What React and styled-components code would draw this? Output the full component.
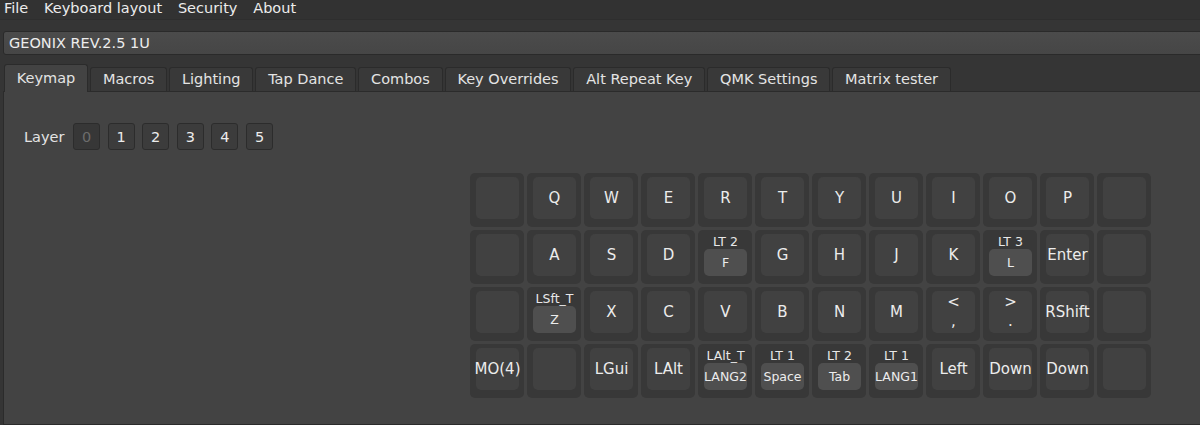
import React from 'react';
import styled, {createGlobalStyle} from 'styled-components';

const GlobalStyle = createGlobalStyle`
    body {
        margin : 0;
        background : #353535;
        font-family : "DejaVu Sans", "Noto Sans", sans-serif;
        font-size : 14.5px;
        color : #e6e6e6;
        overflow : hidden;
    }
`;

const menus = ['File','Keyboard layout','Security','About'];
const tabs = ['Keymap','Macros','Lighting','Tap Dance','Combos','Key Overrides','Alt Repeat Key','QMK Settings','Matrix tester'];
const layers = [0,1,2,3,4,5];

// a key is either a plain label, a tap key {top, label} or a two line shifted key [upper, lower]
const keymap = [
    ['','Q','W','E','R','T','Y','U','I','O','P',''],
    ['','A','S','D',{top:'LT 2',label:'F'},'G','H','J','K',{top:'LT 3',label:'L'},'Enter',''],
    ['',{top:'LSft_T',label:'Z'},'X','C','V','B','N','M',['<',','],['>','.'],'RShift',''],
    ['MO(4)','','LGui','LAlt',{top:'LAlt_T',label:'LANG2'},{top:'LT 1',label:'Space'},{top:'LT 2',label:'Tab'},{top:'LT 1',label:'LANG1'},'Left','Down','Down',''],
];

const Key = ({data})=> {
    if (data && typeof data === 'object' && !Array.isArray(data)) {
        return (
            <KeyBody>
                <TapLabel>{data.top}</TapLabel>
                <TapCap>{data.label}</TapCap>
            </KeyBody>
        );
    }
    return (
        <KeyBody>
            <Cap>
                {Array.isArray(data)
                    ? <Stack><span>{data[0]}</span><span>{data[1]}</span></Stack>
                    : data}
            </Cap>
        </KeyBody>
    );
};

const App = ()=> {
    return (
        <Window>
            <GlobalStyle/>
            <MenuBar>
                {menus.map(m=> <MenuItem key={m}>{m}</MenuItem>)}
            </MenuBar>
            <DeviceSelect>GEONIX REV.2.5 1U</DeviceSelect>
            <TabBar>
                {tabs.map((t,i)=> <Tab key={t} active={i === 0}>{t}</Tab>)}
            </TabBar>
            <Panel>
                <LayerRow>
                    <LayerLabel>Layer</LayerLabel>
                    {layers.map(l=> <LayerButton key={l} disabled={l === 0}>{l}</LayerButton>)}
                </LayerRow>
                <Keyboard>
                    {keymap.flat().map((k,i)=> <Key key={i} data={k}/>)}
                </Keyboard>
            </Panel>
        </Window>
    );
};

const Window = styled.div`
    display : flex;
    flex-direction : column;
    width : 1200px;
    height : 425px;
    overflow : hidden;
`;
const MenuBar = styled.div`
    display : flex;
    gap : 15.8px;
    height : 19px;
    padding-left : 4px;
    background : #323232;
    border-bottom : 1px solid #2e2e2e;
    line-height : 16px;
`;
const MenuItem = styled.span`
    color : #ececec;
`;
const DeviceSelect = styled.div`
    margin : 11px 0 0 3px;
    width : 1260px;
    height : 24px;
    box-sizing : border-box;
    padding-left : 5px;
    line-height : 22px;
    background : linear-gradient(#4b4b4b, #464646);
    border : 1px solid #2a2a2a;
    border-radius : 3px;
    color : #ededed;
`;
const TabBar = styled.div`
    display : flex;
    align-items : flex-end;
    gap : 2px;
    margin-top : 9px;
    padding-left : 4px;
    height : 27px;
`;
const Tab = styled.div`
    position : relative;
    z-index : ${p=> p.active ? 1 : 0};
    height : ${p=> p.active ? 28 : 24}px;
    margin-bottom : ${p=> p.active ? -1 : 0}px;
    box-sizing : border-box;
    padding : ${p=> p.active ? 2 : 0}px 11.8px 0;
    line-height : 23px;
    background : ${p=> p.active ? '#434343' : '#393939'};
    border : 1px solid #2b2b2b;
    border-bottom : none;
    border-radius : 3px 3px 0 0;
    color : #e4e4e4;
    white-space : nowrap;
`;
const Panel = styled.div`
    flex : 1;
    margin-left : 3px;
    background : #434343;
    border : 1px solid #2b2b2b;
    border-right : none;
    padding : 31px 0 0 20px;
`;
const LayerRow = styled.div`
    display : flex;
    align-items : center;
    gap : 7.6px;
    height : 27px;
`;
const LayerLabel = styled.span`
    margin-right : 1px;
    color : #e4e4e4;
`;
const LayerButton = styled.div`
    width : 27px;
    height : 27px;
    box-sizing : border-box;
    display : flex;
    align-items : center;
    justify-content : center;
    background : ${p=> p.disabled ? '#373737' : '#3c3c3c'};
    border : 1px solid #2c2c2c;
    border-radius : 3px;
    color : ${p=> p.disabled ? '#6c6c6c' : '#ececec'};
`;
const Keyboard = styled.div`
    display : grid;
    grid-template-columns : repeat(12, 54px);
    grid-auto-rows : 54px;
    gap : 3px;
    margin : 23px 0 0 446px;
`;
const KeyBody = styled.div`
    position : relative;
    display : flex;
    flex-direction : column;
    align-items : center;
    background : #383838;
    border-radius : 5px;
    padding : 4px 5px 8px 6px;
    box-sizing : border-box;
`;
const Cap = styled.div`
    flex : 1;
    align-self : stretch;
    display : flex;
    align-items : center;
    justify-content : center;
    background : #414141;
    border-radius : 5px;
    font-size : 15px;
    color : #ececec;
    white-space : nowrap;
`;
const Stack = styled.div`
    display : flex;
    flex-direction : column;
    align-items : center;
    line-height : 19px;
`;
const TapLabel = styled.div`
    height : 15px;
    font-size : 12.5px;
    line-height : 15px;
    color : #e8e8e8;
    white-space : nowrap;
`;
const TapCap = styled.div`
    flex : 1;
    align-self : stretch;
    display : flex;
    align-items : center;
    justify-content : center;
    margin-top : 0;
    background : #4f4f4f;
    border-radius : 5px;
    font-size : 12.5px;
    color : #ececec;
    white-space : nowrap;
`;

export default App;
